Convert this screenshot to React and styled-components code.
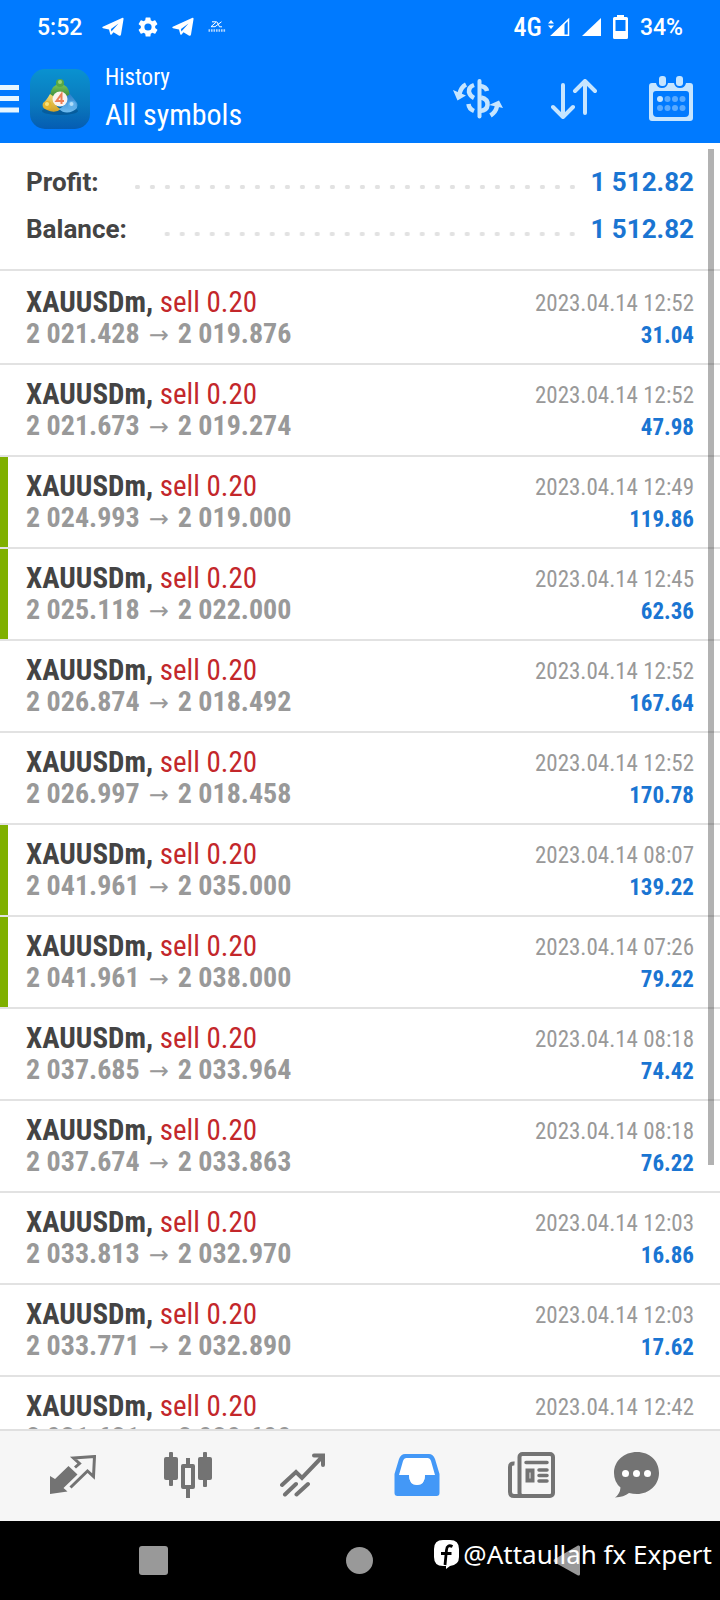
import React from "react";
import styled, { createGlobalStyle } from "styled-components";

const narrow = `"Roboto Condensed", "Liberation Sans Narrow", Roboto, sans-serif`;

const GlobalStyle = createGlobalStyle`
  * {
    box-sizing: border-box;
  }
  body {
    margin: 0;
    background: #fff;
    font-family: Roboto, sans-serif;
  }
  button {
    padding: 0;
    border: 0;
    background: none;
    cursor: pointer;
  }
  svg {
    display: block;
  }
`;

const Screen = styled.div`
  display: flex;
  flex-direction: column;
  height: 100vh;
`;
const Header = styled.header`
  flex: none;
  background: #007aff;
  color: #fff;
`;
const StatusBar = styled.div`
  display: flex;
  align-items: center;
  justify-content: space-between;
  height: 54px;
  padding: 0 37px;
  font-size: 23px;
  font-weight: 500;
`;
const StatusGroup = styled.div`
  display: flex;
  align-items: center;
  gap: 12px;
`;
const Clock = styled.span`
  margin-right: 8px;
`;
const Network = styled.span`
  font-family: ${narrow};
  font-size: 26px;
  font-weight: 500;
  margin-right: -6px;
`;
const Toolbar = styled.div`
  display: flex;
  align-items: center;
  height: 89px;
  padding-right: 27px;
`;
const MenuButton = styled.button`
  margin-right: 11px;
`;
const Titles = styled.div`
  flex: 1;
  margin-left: 15px;
  padding-bottom: 4px;
  font-family: ${narrow};
`;
const Subtitle = styled.div`
  font-size: 23px;
  line-height: 36px;
`;
const Title = styled.h1`
  margin: 0;
  font-size: 30px;
  font-weight: 400;
  line-height: 38px;
`;
const Actions = styled.div`
  display: flex;
  align-items: center;
  gap: 48px;
`;

const Main = styled.main`
  position: relative;
  flex: 1;
  min-height: 0;
`;
const Scroller = styled.div`
  height: 100%;
  overflow-y: auto;
  scrollbar-width: none;
`;
const ScrollThumb = styled.div`
  position: absolute;
  top: 6px;
  right: 6px;
  width: 6px;
  height: 79%;
  background: rgba(0, 0, 0, 0.3);
`;
const Summary = styled.dl`
  margin: 0 0 2px;
  padding: 15px 26px 17px;
  border-bottom: 2px solid #e2e2e2;
`;
const SummaryRow = styled.div`
  display: flex;
  align-items: center;
  height: 47px;
  font-size: 26px;
  font-weight: 700;
`;
const SummaryLabel = styled.dt`
  color: #444;
`;
const Leader = styled.span`
  flex: 1;
  height: 4px;
  margin: 10px 11px 0 36px;
  background: radial-gradient(circle at 50% 50%, #e2e2e2 2px, transparent 3px)
    right center / 15px 4px repeat-x;
`;
const SummaryValue = styled.dd`
  margin: 0;
  color: #1a75d2;
`;
const Deals = styled.ul`
  margin: 0;
  padding: 0;
  list-style: none;
  font-family: ${narrow};
`;
const DealItem = styled.li`
  display: flex;
  justify-content: space-between;
  height: 92px;
  padding: 13px 26px 0;
  border-bottom: 2px solid #e2e2e2;
  background: linear-gradient(#7fb000, #7fb000) left top /
    ${(props) => (props.$closed ? 8 : 0)}px 100% no-repeat;
`;
const Cell = styled.div`
  text-align: ${(props) => (props.$end ? "right" : "left")};
  padding-top: ${(props) => (props.$end ? 2 : 0)}px;
  white-space: nowrap;
`;
const Line = styled.div`
  font-size: 29px;
  line-height: 32px;
`;
const Symbol = styled.strong`
  color: #444;
`;
const Side = styled.span`
  color: #c3272b;
`;
const Prices = styled(Line)`
  color: #999;
  font-size: 28px;
  font-weight: 700;
`;
const Arrow = styled.span`
  font-family: "Noto Sans", "DejaVu Sans", sans-serif;
  font-size: 24px;
  font-weight: 400;
  margin: 0 9px;
`;
const Time = styled.time`
  display: block;
  color: #999;
  font-size: 23px;
  line-height: 32px;
`;
const Profit = styled.div`
  color: #1a75d2;
  font-size: 23px;
  font-weight: 700;
  line-height: 32px;
`;

const TabBar = styled.nav`
  flex: none;
  display: grid;
  grid-template-columns: repeat(6, 1fr);
  height: 92px;
  padding: 0 16px 2px;
  border-top: 2px solid #e0e0e0;
  background: #f6f6f6;
`;
const Tab = styled.button`
  display: flex;
  align-items: center;
  justify-content: center;
  color: ${(props) => (props.$active ? "#4398f7" : "#737373")};
`;
const SystemBar = styled.footer`
  position: relative;
  flex: none;
  display: grid;
  grid-template-columns: repeat(3, 1fr);
  height: 79px;
  padding: 0 50px;
  background: #000;
`;
const SystemButton = styled.button`
  display: flex;
  align-items: center;
  justify-content: center;
  color: #999;
`;
const Watermark = styled.div`
  position: absolute;
  top: 15px;
  right: 8px;
  display: flex;
  align-items: center;
  gap: 4px;
  color: #fff;
  font-family: "Noto Sans", sans-serif;
  font-size: 26px;
  line-height: 36px;
`;

const TelegramIcon = () => (
  <svg width="22" height="20" viewBox="0 0 22 20" fill="#fff">
    <path d="M.8 9.800 20 1q1.800-.7 1.500 1.200L19 17.500q-.4 2-2.200 1L11.500 15.200 9.600 17.600q-1 .8-1.400-.5L7 12.500 1 11.200Q-.3 10.600.8 9.800ZM9 12 9.400 14.500 16.500 6.500Z" />
  </svg>
);

const GearIcon = () => (
  <svg width="24" height="24" viewBox="0 0 24 24" fill="#fff">
    <path d="M19.14 12.94c.04-.3.06-.61.06-.94s-.02-.64-.07-.94l2.030-1.580a.49.49 0 0 0 .12-.61l-1.920-3.320a.49.49 0 0 0-.59-.22l-2.390.96a7 7 0 0 0-1.620-.94l-.36-2.540a.48.48 0 0 0-.48-.41h-3.840a.48.48 0 0 0-.47.41l-.36 2.540c-.59.24-1.130.57-1.620.94l-2.390-.96a.48.48 0 0 0-.59.22L2.740 8.870a.48.48 0 0 0 .12.61l2.030 1.580a6 6 0 0 0 0 1.880l-2.030 1.580a.49.49 0 0 0-.12.61l1.920 3.320c.12.22.37.29.59.22l2.390-.96c.5.38 1.030.7 1.620.94l.36 2.540c.05.24.24.41.48.41h3.840c.24 0 .44-.17.47-.41l.36-2.540a7 7 0 0 0 1.620-.94l2.390.96c.22.08.47 0 .59-.22l1.920-3.320a.48.48 0 0 0-.12-.61ZM12 15.600a3.600 3.600 0 1 1 0-7.200 3.600 3.600 0 0 1 0 7.200Z" />
  </svg>
);

const ExpressIcon = () => (
  <svg width="20" height="12" viewBox="0 0 20 12" fill="none" stroke="#fff">
    <path d="M6 .8H10.500L5 5.700H9L15.500.8M11 1 13.500 5.800H16" />
    <path d="M2.500 9.500H19.500" strokeWidth="2.500" strokeDasharray="1.600 .9" opacity=".7" />
  </svg>
);

const WeakSignalIcon = () => (
  <svg width="22" height="20" viewBox="0 0 22 20">
    <path d="M0 6.500 3 3 6 6.500ZM0 8.500 3 12 6 8.500Z" fill="#fff" />
    <path d="M20.500 2.500V18.250H4Z" fill="none" stroke="#fff" strokeWidth="1.500" />
    <path d="M16.500 6V19H3Z" fill="#fff" />
  </svg>
);

const SignalIcon = () => (
  <svg width="19" height="20" viewBox="0 0 19 20">
    <path d="M19 1V19H0Z" fill="#fff" />
  </svg>
);

const BatteryIcon = () => (
  <svg width="15" height="24" viewBox="0 0 15 24" fill="#fff">
    <path
      fillRule="evenodd"
      d="M4 0h7v2h2.500Q15 2 15 3.500V22.500Q15 24 13.500 24H1.500Q0 24 0 22.500V3.500Q0 2 1.500 2H4ZM2.500 5V16H12.500V5Z"
    />
  </svg>
);

const MenuIcon = () => (
  <svg width="19" height="28" viewBox="0 0 19 28" fill="#e6f6ff">
    <path d="M0 0H19V5H0ZM0 11H19V16H0ZM0 22.500H19V27.500H0Z" />
  </svg>
);

const AppLogo = () => (
  <svg width="60" height="60" viewBox="0 0 60 60" role="img" aria-label="MetaTrader 4">
    <defs>
      <linearGradient id="tile" x1="0" y1="0" x2="0" y2="1">
        <stop offset="0" stopColor="#0a92d0" />
        <stop offset="0.6" stopColor="#0a78bd" />
        <stop offset="1" stopColor="#055cb2" />
      </linearGradient>
      <linearGradient id="green" x1="0" y1="0" x2="0" y2="1">
        <stop offset="0" stopColor="#7cc457" />
        <stop offset="1" stopColor="#35873a" />
      </linearGradient>
      <linearGradient id="gold" x1="0" y1="0" x2="0" y2="1">
        <stop offset="0" stopColor="#ecdc7a" />
        <stop offset="1" stopColor="#d3a022" />
      </linearGradient>
      <linearGradient id="blue" x1="0" y1="0" x2="0" y2="1">
        <stop offset="0" stopColor="#2b7fca" />
        <stop offset="1" stopColor="#70bdf0" />
      </linearGradient>
    </defs>
    <rect width="60" height="60" rx="15" fill="url(#tile)" />
    <ellipse cx="30" cy="42" rx="18" ry="4" fill="#034a80" opacity=".5" />
    <path d="M20 26Q22 15 30 15T40 26L36 29Q30 22 24 29Z" fill="url(#green)" />
    <path d="M20 25Q26 28 25 34 27 39 31 40 25 45 17 41 11 39 13 34 16 32 20 25Z" fill="url(#gold)" />
    <path d="M40 25Q34 28 35 34 33 38 29 40 35 46 43 42 49 39 47 34 44 30 40 25Z" fill="url(#blue)" />
    <circle cx="30" cy="14" r="4" fill="#58a845" />
    <circle cx="30" cy="13" r="2" fill="#9ad377" />
    <circle cx="17.500" cy="36" r="4" fill="#e3b52f" />
    <circle cx="17" cy="35" r="2" fill="#f8e27a" />
    <circle cx="42" cy="36" r="4" fill="#5fb0ea" />
    <circle cx="41.500" cy="35" r="2" fill="#b2def9" />
    <circle cx="30" cy="30" r="7.500" fill="#fbf4ef" />
    <path d="M31.500 35V25L26.500 32H34" fill="none" stroke="#ec7f56" strokeWidth="2" />
  </svg>
);

const CurrencyIcon = () => (
  <svg width="50" height="40" viewBox="0 0 50 40" fill="none" stroke="#c6e5ff">
    <path d="M26.500 2V37.500" strokeWidth="4" strokeLinecap="round" />
    <path
      d="M34 12Q33 7.500 27 7M28 18.500Q35 20 34.500 26 34 31.500 27 32M21 6Q15.500 8 16 13 17 17 21 19M15.500 25Q16 30 21 32"
      strokeWidth="4.500"
    />
    <path d="M13 5.500Q8 8 6.500 15M37.500 36.500Q43 33 44 27" strokeWidth="4.500" />
    <path d="M0 11 4.500 21.500 13 16.500ZM50 29 46 21.500 36 26Z" fill="#c6e5ff" stroke="none" />
  </svg>
);

const SortIcon = () => (
  <svg
    width="50"
    height="40"
    viewBox="0 0 50 40"
    fill="none"
    stroke="#c6e5ff"
    strokeWidth="4"
    strokeLinecap="round"
    strokeLinejoin="round"
  >
    <path d="M12 6V37M2 28 12 38 22 28M34 34V2M24 12 34 2 44 12" />
  </svg>
);

const CalendarIcon = () => (
  <svg width="44" height="46" viewBox="0 0 44 46" fill="#c6e5ff">
    <path
      fillRule="evenodd"
      d="M3 7H7Q8 12 13 12T19 7H25Q26 12 31 12T37 7H41Q44 7 44 10V42Q44 45 41 45H3Q0 45 0 42V10Q0 7 3 7ZM7 15Q4 15 4 18V37Q4 41 8 41H36Q40 41 40 37V18Q40 15 37 15Z"
    />
    <rect x="10" y="0" width="7" height="10" rx="3" />
    <rect x="27" y="0" width="7" height="10" rx="3" />
    <circle cx="11" cy="23" r="3" />
    <g opacity=".45">
      <circle cx="18.500" cy="23" r="3" />
      <circle cx="26" cy="23" r="3" />
      <circle cx="33.500" cy="23" r="3" />
      <circle cx="11" cy="32" r="3" />
      <circle cx="18.500" cy="32" r="3" />
      <circle cx="26" cy="32" r="3" />
      <circle cx="33.500" cy="32" r="3" />
    </g>
  </svg>
);

const QuotesIcon = () => (
  <svg width="46" height="40" viewBox="0 0 46 40">
    <path d="M18.500 11 27.500 19.500 13.500 33 17.500 36.500 0 39V21L5 24Z" fill="currentColor" />
    <path
      d="M25 12.500 29.500 8.500 23.500 3 44.500 1.500 43.500 21.500 37.500 16 20.500 32.500"
      fill="none"
      stroke="currentColor"
      strokeWidth="3"
    />
  </svg>
);

const ChartIcon = () => (
  <svg width="48" height="46" viewBox="0 0 48 46" fill="currentColor">
    <rect x="0" y="5" width="14" height="23" rx="2" />
    <rect x="5" y="0" width="4" height="34" rx="1" />
    <rect x="34" y="5" width="14" height="23" rx="2" />
    <rect x="39" y="0" width="4" height="35" rx="1" />
    <path d="M22 6H26V12H29Q31 12 31 14V35Q31 37 29 37H26V46H22V37H19Q17 37 17 35V14Q17 12 19 12H22ZM21 16V33H27V16Z" fillRule="evenodd" />
  </svg>
);

const TradeIcon = () => (
  <svg
    width="46"
    height="44"
    viewBox="0 0 46 44"
    fill="none"
    stroke="currentColor"
    strokeWidth="4"
    strokeLinecap="round"
  >
    <path d="M2 32 16 19 22 25 42 4M34 2.500H43V12M5 41.500 16 31M16.500 41.500 28 31" />
  </svg>
);

const HistoryIcon = () => (
  <svg width="46" height="42" viewBox="0 0 46 42">
    <path d="M12 2H34Q38 2 40 7L43 21 40 24H6L3 21 6 7Q8 2 12 2Z" fill="#fff" />
    <path
      fill="currentColor"
      fillRule="evenodd"
      d="M11 0H35Q39 0 41 5L45.500 20V39Q45.500 42 42.500 42H3.500Q.5 42 .5 39V20L5 5Q7 0 11 0ZM12.500 4Q10 4 9 7L5 21H15Q15 31 23 31T31 21H41L37 7Q36 4 33.500 4Z"
    />
    <path d="M15 20H31Q31 31 23 31T15 20Z" fill="#fff" />
  </svg>
);

const NewsIcon = () => (
  <svg width="47" height="46" viewBox="0 0 47 46" fill="none" stroke="currentColor" strokeWidth="4">
    <rect x="11.500" y="2" width="33.500" height="42" rx="3" />
    <path d="M6.500 11.500Q2 11 2 15V40Q2 44 6 44H14" />
    <rect x="19.500" y="18.500" width="5" height="10" />
    <path d="M18 10.500H39M31 18H39M31 23.500H39M31 29H39" strokeWidth="3.500" strokeLinecap="round" />
  </svg>
);

const ChatIcon = () => (
  <svg width="66" height="46" viewBox="0 0 66 46" fill="currentColor">
    <path d="M23 0C36 0 45 9 45 21S35 42 23 42Q19 42 15 41 10 45 1 45.500 6 42 6.500 35.500 0 30 0 21C0 9 10 0 23 0Z" />
    <g fill="#fff">
      <circle cx="11.500" cy="21.500" r="3.500" />
      <circle cx="22.500" cy="21.500" r="3.500" />
      <circle cx="33.500" cy="21.500" r="3.500" />
    </g>
  </svg>
);

const RecentsIcon = () => (
  <svg width="29" height="29" viewBox="0 0 29 29" fill="currentColor">
    <rect width="29" height="29" rx="3" />
  </svg>
);

const HomeIcon = () => (
  <svg width="27" height="27" viewBox="0 0 27 27" fill="currentColor">
    <circle cx="13.500" cy="13.500" r="13.500" />
  </svg>
);

const BackIcon = () => (
  <svg width="28" height="31" viewBox="0 0 28 31" fill="currentColor">
    <path d="M25 .5Q27 0 27 2V29Q27 31 25 30.500L1 17Q0 15.500 1 14.500Z" />
  </svg>
);

const FacebookIcon = () => (
  <svg width="25" height="29" viewBox="0 0 25 29">
    <path d="M9 0H16Q25 0 25 9V17Q25 25 16 26L12 29V26H9Q0 26 0 17V9Q0 0 9 0Z" fill="#fff" />
    <path d="M18.500 6.500Q13 4 12.500 10L11 25M7 13.500H17.500" fill="none" stroke="#000" strokeWidth="2.800" />
  </svg>
);

const totals = [
  { label: "Profit:", value: "1 512.82" },
  { label: "Balance:", value: "1 512.82" },
];

const deals = [
  { open: "2 021.428", close: "2 019.876", time: "12:52", profit: "31.04" },
  { open: "2 021.673", close: "2 019.274", time: "12:52", profit: "47.98" },
  { open: "2 024.993", close: "2 019.000", time: "12:49", profit: "119.86", closed: true },
  { open: "2 025.118", close: "2 022.000", time: "12:45", profit: "62.36", closed: true },
  { open: "2 026.874", close: "2 018.492", time: "12:52", profit: "167.64" },
  { open: "2 026.997", close: "2 018.458", time: "12:52", profit: "170.78" },
  { open: "2 041.961", close: "2 035.000", time: "08:07", profit: "139.22", closed: true },
  { open: "2 041.961", close: "2 038.000", time: "07:26", profit: "79.22", closed: true },
  { open: "2 037.685", close: "2 033.964", time: "08:18", profit: "74.42" },
  { open: "2 037.674", close: "2 033.863", time: "08:18", profit: "76.22" },
  { open: "2 033.813", close: "2 032.970", time: "12:03", profit: "16.86" },
  { open: "2 033.771", close: "2 032.890", time: "12:03", profit: "17.62" },
  { open: "2 031.621", close: "2 030.600", time: "12:42", profit: "20.42" },
];

const tabs = [
  { name: "Quotes", Icon: QuotesIcon },
  { name: "Charts", Icon: ChartIcon },
  { name: "Trade", Icon: TradeIcon },
  { name: "History", Icon: HistoryIcon, active: true },
  { name: "News", Icon: NewsIcon },
  { name: "Messages", Icon: ChatIcon },
];

const Deal = ({ open, close, time, profit, closed }) => (
  <DealItem $closed={closed}>
    <Cell>
      <Line>
        <Symbol>XAUUSDm,</Symbol> <Side>sell 0.20</Side>
      </Line>
      <Prices>
        {open}
        <Arrow>→</Arrow>
        {close}
      </Prices>
    </Cell>
    <Cell $end>
      <Time>2023.04.14 {time}</Time>
      <Profit>{profit}</Profit>
    </Cell>
  </DealItem>
);

const App = () => (
  <Screen>
    <GlobalStyle />
    <Header>
      <StatusBar>
        <StatusGroup>
          <Clock>5:52</Clock>
          <TelegramIcon />
          <GearIcon />
          <TelegramIcon />
          <ExpressIcon />
        </StatusGroup>
        <StatusGroup>
          <Network>4G</Network>
          <WeakSignalIcon />
          <SignalIcon />
          <BatteryIcon />
          <span>34%</span>
        </StatusGroup>
      </StatusBar>
      <Toolbar>
        <MenuButton aria-label="Menu">
          <MenuIcon />
        </MenuButton>
        <AppLogo />
        <Titles>
          <Subtitle>History</Subtitle>
          <Title>All symbols</Title>
        </Titles>
        <Actions>
          <button aria-label="Currency">
            <CurrencyIcon />
          </button>
          <button aria-label="Sort">
            <SortIcon />
          </button>
          <button aria-label="Period">
            <CalendarIcon />
          </button>
        </Actions>
      </Toolbar>
    </Header>
    <Main>
      <Scroller>
        <Summary>
          {totals.map(({ label, value }) => (
            <SummaryRow key={label}>
              <SummaryLabel>{label}</SummaryLabel>
              <Leader />
              <SummaryValue>{value}</SummaryValue>
            </SummaryRow>
          ))}
        </Summary>
        <Deals>
          {deals.map((deal, i) => (
            <Deal key={`deal-${i}`} {...deal} />
          ))}
        </Deals>
      </Scroller>
      <ScrollThumb />
    </Main>
    <TabBar>
      {tabs.map(({ name, Icon, active }) => (
        <Tab key={name} aria-label={name} $active={active}>
          <Icon />
        </Tab>
      ))}
    </TabBar>
    <SystemBar>
      <SystemButton aria-label="Recents">
        <RecentsIcon />
      </SystemButton>
      <SystemButton aria-label="Home">
        <HomeIcon />
      </SystemButton>
      <SystemButton aria-label="Back">
        <BackIcon />
      </SystemButton>
      <Watermark>
        <FacebookIcon />
        <span>@Attaullah fx Expert</span>
      </Watermark>
    </SystemBar>
  </Screen>
);

export default App;
